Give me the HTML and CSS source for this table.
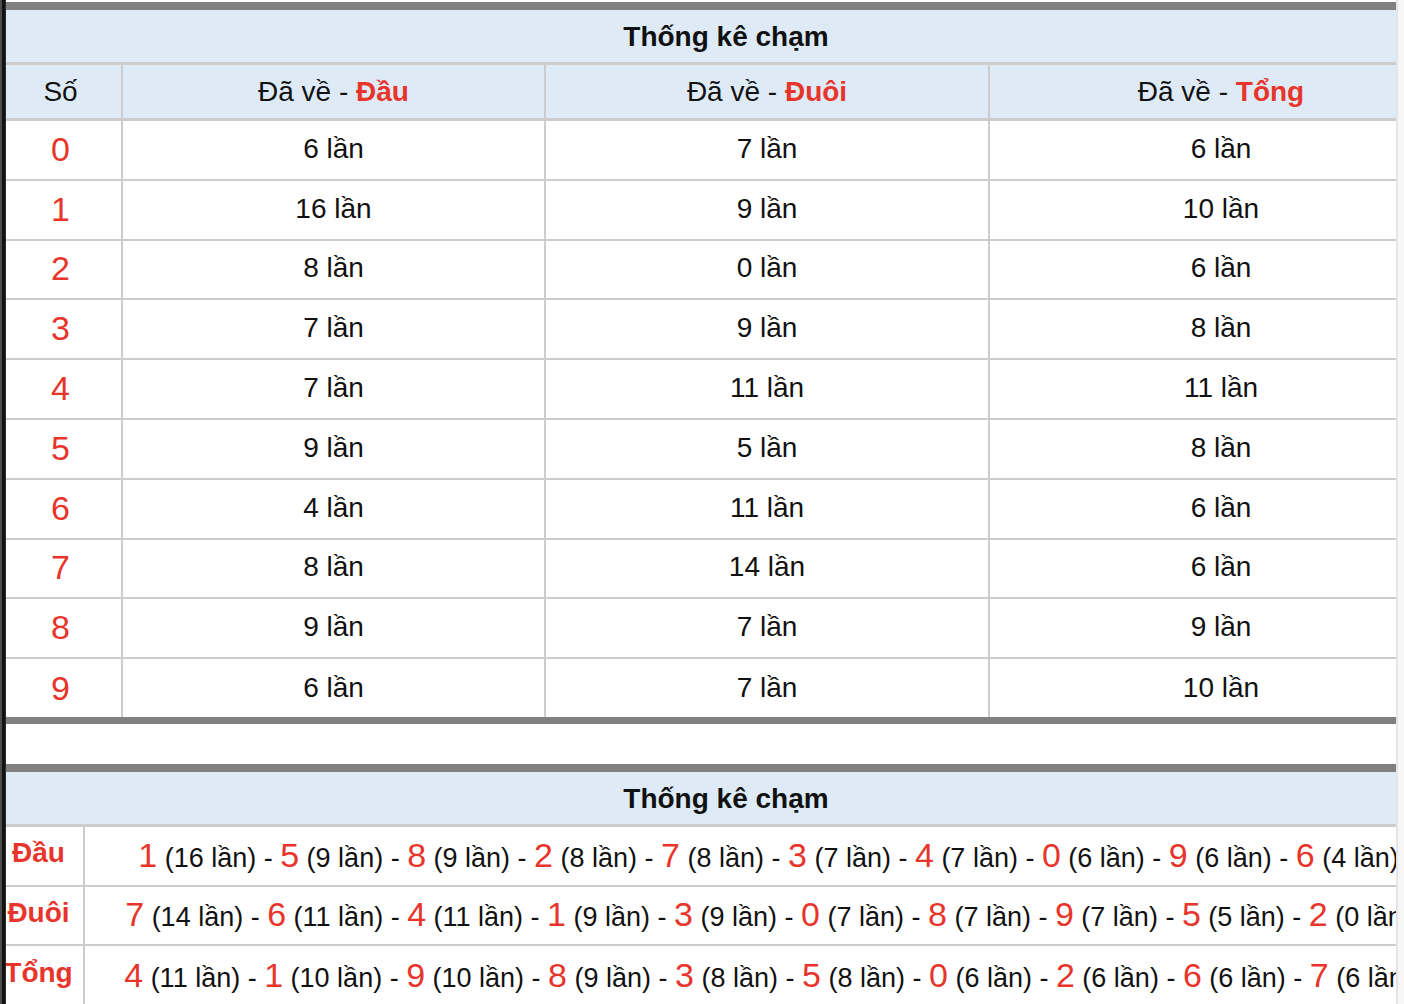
FILE: index.html
```html
<!DOCTYPE html>
<html lang="vi">
<head>
<meta charset="utf-8">
<title>Thống kê chạm</title>
<link rel="stylesheet" href="styles.css">
</head>
<body>
<div class="page">
  <div class="viewport">
    <div class="edge-left"></div>
    <table class="stat stat-main">
      <colgroup>
        <col class="c1"><col class="c2"><col class="c3"><col class="c4">
      </colgroup>
      <tr class="title-row"><th colspan="4">Thống kê chạm</th></tr>
      <tr class="head-row">
        <th class="first">Số</th>
        <th>Đã về - <b class="red">Đầu</b></th>
        <th>Đã về - <b class="red">Đuôi</b></th>
        <th>Đã về - <b class="red">Tổng</b></th>
      </tr>
      <tr><td class="first num">0</td><td>6 lần</td><td>7 lần</td><td>6 lần</td></tr>
      <tr><td class="first num">1</td><td>16 lần</td><td>9 lần</td><td>10 lần</td></tr>
      <tr><td class="first num">2</td><td>8 lần</td><td>0 lần</td><td>6 lần</td></tr>
      <tr><td class="first num">3</td><td>7 lần</td><td>9 lần</td><td>8 lần</td></tr>
      <tr><td class="first num">4</td><td>7 lần</td><td>11 lần</td><td>11 lần</td></tr>
      <tr><td class="first num">5</td><td>9 lần</td><td>5 lần</td><td>8 lần</td></tr>
      <tr><td class="first num">6</td><td>4 lần</td><td>11 lần</td><td>6 lần</td></tr>
      <tr><td class="first num">7</td><td>8 lần</td><td>14 lần</td><td>6 lần</td></tr>
      <tr><td class="first num">8</td><td>9 lần</td><td>7 lần</td><td>9 lần</td></tr>
      <tr class="last"><td class="first num">9</td><td>6 lần</td><td>7 lần</td><td>10 lần</td></tr>
    </table>

    <table class="stat stat-sum">
      <colgroup>
        <col class="s1"><col class="s2">
      </colgroup>
      <tr class="title-row"><th colspan="2">Thống kê chạm</th></tr>
      <tr class="sum-row">
        <td class="first label">Đầu</td>
        <td class="list"><span class="n">1</span> (16 lần) - <span class="n">5</span> (9 lần) - <span class="n">8</span> (9 lần) - <span class="n">2</span> (8 lần) - <span class="n">7</span> (8 lần) - <span class="n">3</span> (7 lần) - <span class="n">4</span> (7 lần) - <span class="n">0</span> (6 lần) - <span class="n">9</span> (6 lần) - <span class="n">6</span> (4 lần)</td>
      </tr>
      <tr class="sum-row">
        <td class="first label">Đuôi</td>
        <td class="list"><span class="n">7</span> (14 lần) - <span class="n">6</span> (11 lần) - <span class="n">4</span> (11 lần) - <span class="n">1</span> (9 lần) - <span class="n">3</span> (9 lần) - <span class="n">0</span> (7 lần) - <span class="n">8</span> (7 lần) - <span class="n">9</span> (7 lần) - <span class="n">5</span> (5 lần) - <span class="n">2</span> (0 lần)</td>
      </tr>
      <tr class="sum-row last">
        <td class="first label">Tổng</td>
        <td class="list"><span class="n">4</span> (11 lần) - <span class="n">1</span> (10 lần) - <span class="n">9</span> (10 lần) - <span class="n">8</span> (9 lần) - <span class="n">3</span> (8 lần) - <span class="n">5</span> (8 lần) - <span class="n">0</span> (6 lần) - <span class="n">2</span> (6 lần) - <span class="n">6</span> (6 lần) - <span class="n">7</span> (6 lần)</td>
      </tr>
    </table>
  </div>
  <div class="edge-right"></div>
</div>
</body>
</html>
```

FILE: styles.css
```css
* { box-sizing: border-box; }
html, body { margin: 0; padding: 0; background: #ffffff; }
body {
  font-family: "Liberation Sans", Arial, Helvetica, sans-serif;
  color: #111111;
}
.page {
  display: flex;
  width: 1404px;
  height: 1004px;
  overflow: hidden;
}
.viewport {
  position: relative;
  width: 1396px;
  flex: none;
  height: 100%;
  overflow: hidden;
  padding-top: 2px;
}
.edge-left {
  position: absolute;
  left: 0;
  top: 0;
  width: 6px;
  height: 100%;
  background: linear-gradient(to right, #4d4d4d 0, #4d4d4d 2px, #121212 2px, #121212 5px, #2c2c2c 5px, #2c2c2c 6px);
  z-index: 2;
}
.edge-right {
  flex: none;
  width: 8px;
  height: 100%;
  background: #f7f7f7;
  border-left: 2px solid #e4e4e4;
}

.stat {
  width: 1452px;
  table-layout: fixed;
  border-collapse: separate;
  border-spacing: 0;
  border-top: 8px solid #808080;
  font-size: 28px;
}
.stat-main { border-bottom: 7px solid #808080; }
.stat-sum { margin-top: 40px; }

.c1 { width: 121px; }
.c2 { width: 423px; }
.c3 { width: 444px; }
.c4 { width: 464px; }
.s1 { width: 83px; }
.s2 { width: 1369px; }

.stat th, .stat td {
  padding: 0;
  text-align: center;
  vertical-align: middle;
  white-space: nowrap;
  border-left: 2px solid #cccccc;
  border-bottom: 2px solid #cccccc;
  line-height: 1;
}
.stat .first { border-left: 0; }
.stat .last td { border-bottom: 0; }

.title-row th {
  background: #deebf7;
  height: 55px;
  font-weight: bold;
  border-left: 0;
  border-bottom: 3px solid #cccccc;
  padding-top: 1px;
}
.head-row th {
  background: #deebf7;
  height: 56px;
  font-weight: normal;
  border-bottom: 3px solid #cccccc;
}
.stat-main td { height: 59.8px; padding-bottom: 2px; }
.stat-main .last td { height: 58px; padding-bottom: 0; }

.red { color: #e8352b; font-weight: bold; }
.num { color: #e8352b; font-size: 34px; }

.sum-row td { height: 59.5px; padding-bottom: 2px; }
.label {
  color: #e8352b;
  font-weight: bold;
  font-size: 28px;
  padding-right: 6px !important;
  padding-bottom: 5px !important;
}
.list { font-size: 27px; }
.n { color: #e8352b; font-size: 34px; }
```
